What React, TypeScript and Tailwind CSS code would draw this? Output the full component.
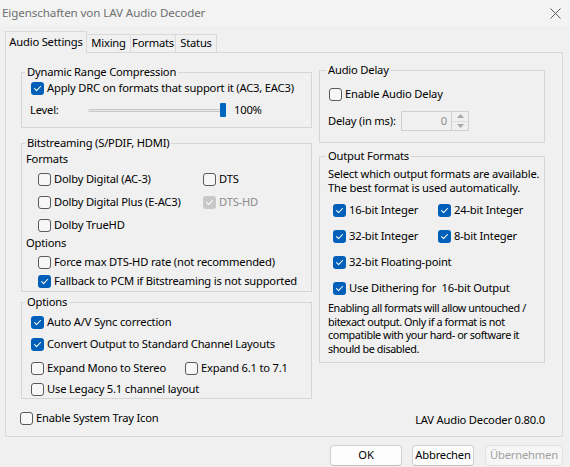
import React from 'react'

type BoxProps = { checked?: boolean; disabled?: boolean }

function Box({ checked = false, disabled = false }: BoxProps) {
  if (checked) {
    return (
      <span
        className={`flex h-[13px] w-[13px] shrink-0 items-center justify-center rounded-[3px] ${
          disabled ? 'bg-[#c8c8c8]' : 'bg-[#005fb8]'
        }`}
      >
        <svg width="9" height="9" viewBox="0 0 9 9" fill="none">
          <path d="M1.6 4.7 L3.6 6.7 L7.5 2.5" stroke="white" strokeWidth="1.1" strokeLinecap="round" strokeLinejoin="round" />
        </svg>
      </span>
    )
  }
  return <span className="h-[13px] w-[13px] shrink-0 rounded-[3px] border border-[#5a5a5a] bg-[#f7f7f7]" />
}

type CheckProps = BoxProps & { label: string; className?: string }

function Check({ label, checked, disabled, className = '' }: CheckProps) {
  return (
    <div className={`flex h-4 items-center gap-[3px] whitespace-pre leading-4 ${className}`}>
      <Box checked={checked} disabled={disabled} />
      <span className={disabled ? 'text-[#8c8c8c]' : ''}>{label}</span>
    </div>
  )
}

type GroupProps = { title: string; className?: string; legend?: string; children: React.ReactNode }

function Group({ title, className = '', legend = 'ml-[3px]', children }: GroupProps) {
  return (
    <fieldset className={`flex flex-col border border-[#d6d6d6] ${className}`}>
      <legend className={`whitespace-nowrap px-[2px] leading-4 ${legend}`}>{title}</legend>
      {children}
    </fieldset>
  )
}

export default function App() {
  return (
    <div className="flex h-[467px] w-[570px] flex-col overflow-hidden whitespace-nowrap bg-[#f0f0f0] font-['Noto_Sans',sans-serif] text-[11.2px] tracking-[-0.2px] text-black">
      {/* title bar */}
      <div className="flex h-[26px] shrink-0 items-center justify-between bg-[#f3f3f3] pl-[2px] pr-[9px]">
        <span className="text-[11.6px] tracking-[-0.1px] text-[#6f6f6f]">Eigenschaften von LAV Audio Decoder</span>
        <svg width="11" height="11" viewBox="0 0 11 11">
          <path d="M0.5 0.5 L10.5 10.5 M10.5 0.5 L0.5 10.5" stroke="#5a5a5a" strokeWidth="1" />
        </svg>
      </div>

      {/* tabs */}
      <div className="flex h-[26px] shrink-0 items-end pl-[5px]">
        <div className="relative z-10 mb-[-1px] flex h-[22px] w-[82px] items-center justify-center border-x border-t border-[#d9d9d9] bg-[#f0f0f0]">
          Audio Settings
        </div>
        <div className="flex h-[18px] w-[44px] items-center justify-center border-r border-t border-[#d9d9d9]">Mixing</div>
        <div className="flex h-[18px] w-[45px] items-center justify-center border-r border-t border-[#d9d9d9]">Formats</div>
        <div className="flex h-[18px] w-[41px] items-center justify-center border-r border-t border-[#d9d9d9]">Status</div>
      </div>

      {/* tab page */}
      <div className="ml-[5px] flex h-[385px] w-[558px] shrink-0 border border-[#d9d9d9]">
        {/* left column */}
        <div className="ml-[15px] flex w-[291px] flex-col pt-[11px]">
          <Group title="Dynamic Range Compression" className="h-[64px]">
            <Check className="ml-[9px]" checked label="Apply DRC on formats that support it (AC3, EAC3)" />
            <div className="ml-[8px] mt-[6px] flex h-4 items-center">
              <span className="w-[58px]">Level:</span>
              <div className="h-[3px] w-[134px] rounded-full border border-[#c8c8c8] bg-[#e9e9e9]" />
              <div className="ml-[-2px] h-[14px] w-[6px] rounded-[1px] bg-[#0067c0]" />
              <span className="ml-[8px]">100%</span>
            </div>
          </Group>

          <Group title="Bitstreaming (S/PDIF, HDMI)" className="mt-[7px] h-[157px]">
            <div className="ml-[4px] h-4 leading-4">Formats</div>
            <div className="ml-[16px] mt-[4px] grid grid-cols-[165px_auto]">
              <Check label="Dolby Digital (AC-3)" />
              <Check label="DTS" />
            </div>
            <div className="ml-[16px] mt-[7px] grid grid-cols-[165px_auto]">
              <Check label="Dolby Digital Plus (E-AC3)" />
              <Check checked disabled label="DTS-HD" />
            </div>
            <Check className="ml-[16px] mt-[7px]" label="Dolby TrueHD" />
            <div className="ml-[4px] mt-[2px] h-4 leading-4">Options</div>
            <Check className="ml-[16px] mt-[3px]" label="Force max DTS-HD rate (not recommended)" />
            <Check className="ml-[16px] mt-[3px]" checked label="Fallback to PCM if Bitstreaming is not supported" />
          </Group>

          <Group title="Options" className="mt-[2px] h-[105px]">
            <Check className="ml-[9px] mt-[4px]" checked label="Auto A/V Sync correction" />
            <Check className="ml-[9px] mt-[6px]" checked label="Convert Output to Standard Channel Layouts" />
            <div className="ml-[9px] mt-[8px] grid grid-cols-[154px_auto]">
              <Check label="Expand Mono to Stereo" />
              <Check label="Expand 6.1 to 7.1" />
            </div>
            <Check className="ml-[9px] mt-[5px]" label="Use Legacy 5.1 channel layout" />
          </Group>

          <Check className="ml-[-1px] mt-[11px]" label="Enable System Tray Icon" />
        </div>

        {/* right column */}
        <div className="ml-[7px] flex w-[226px] flex-col pt-[9px]">
          <Group title="Audio Delay" legend="ml-[6px]" className="h-[81px]">
            <Check className="ml-[9px] mt-[8px]" label="Enable Audio Delay" />
            <div className="ml-[8px] mt-[9px] flex h-[20px] items-center">
              <span className="w-[73px]">Delay (in ms):</span>
              <div className="flex h-[20px] w-[51px] items-center justify-end border border-[#cfcfcf] pr-[4px] text-[#8c8c8c]">0</div>
              <div className="flex h-[20px] w-[17px] flex-col border border-l-0 border-[#cfcfcf]">
                <div className="flex flex-1 items-center justify-center border-b border-[#dcdcdc]">
                  <svg width="7" height="4" viewBox="0 0 7 4"><path d="M0 4 L3.5 0 L7 4 Z" fill="#a8a8a8" /></svg>
                </div>
                <div className="flex flex-1 items-center justify-center">
                  <svg width="7" height="4" viewBox="0 0 7 4"><path d="M0 0 L3.5 4 L7 0 Z" fill="#a8a8a8" /></svg>
                </div>
              </div>
            </div>
          </Group>

          <Group title="Output Formats" legend="ml-[6px]" className="mt-[5px] h-[215px]">
            <p className="ml-[8px] mt-[3px] leading-[14px]">
              Select which output formats are available.
              <br />
              The best format is used automatically.
            </p>
            <div className="ml-[13px] mt-[7px] grid grid-cols-[105px_auto]">
              <Check checked label="16-bit Integer" />
              <Check checked label="24-bit Integer" />
            </div>
            <div className="ml-[13px] mt-[10px] grid grid-cols-[105px_auto]">
              <Check checked label="32-bit Integer" />
              <Check checked label="8-bit Integer" />
            </div>
            <Check className="ml-[13px] mt-[10px]" checked label="32-bit Floating-point" />
            <Check className="ml-[13px] mt-[10px]" checked label="Use Dithering for  16-bit Output" />
            <p className="ml-[8px] mt-[5px] text-[10.8px] leading-[13.6px] tracking-[-0.4px]">
              Enabling all formats will allow untouched /
              <br />
              bitexact output. Only if a format is not
              <br />
              compatible with your hard- or software it
              <br />
              should be disabled.
            </p>
          </Group>

          <div className="mt-[49px] h-4 text-right leading-4">LAV Audio Decoder 0.80.0</div>
        </div>
      </div>

      {/* buttons */}
      <div className="flex justify-end pr-[7px] pt-[8px]">
        <button className="h-[21px] w-[72px] rounded-[4px] border border-[#d0d0d0] border-b-[#bdbdbd] bg-[#fdfdfd]">OK</button>
        <button className="ml-[10px] h-[21px] w-[62px] rounded-[4px] border border-[#d0d0d0] border-b-[#bdbdbd] bg-[#fdfdfd]">Abbrechen</button>
        <button className="ml-[11px] h-[21px] w-[78px] rounded-[4px] border border-[#e2e2e2] bg-[#f6f6f6] text-[#a0a0a0]">Übernehmen</button>
      </div>
    </div>
  )
}
